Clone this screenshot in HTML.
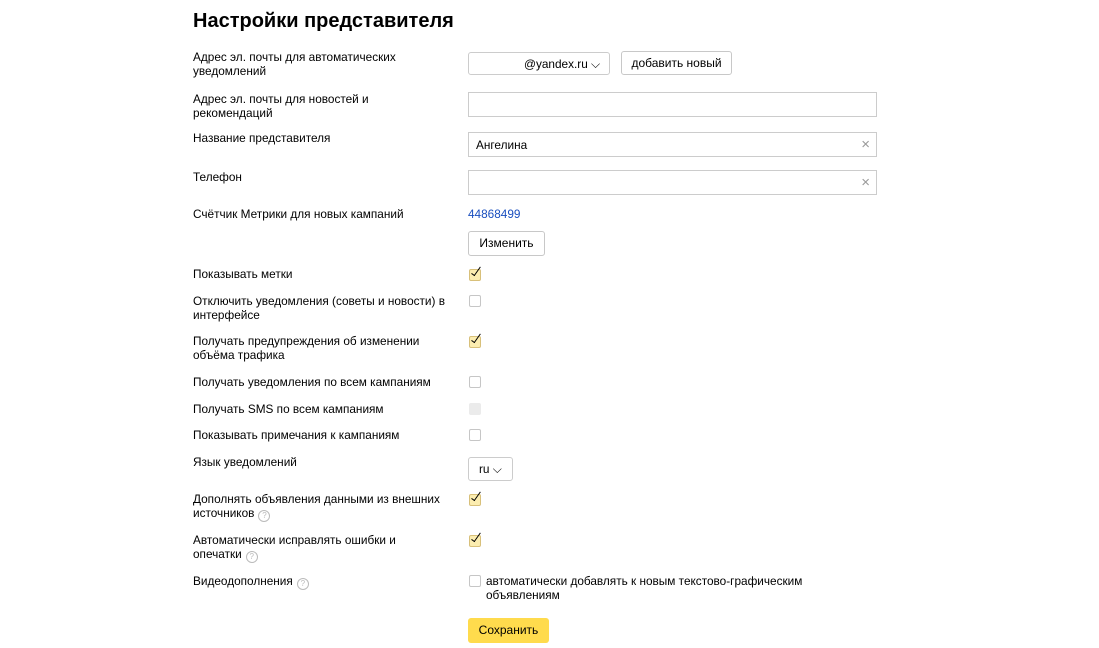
<!DOCTYPE html>
<html><head><meta charset="utf-8"><style>
body{margin:0;width:1099px;height:648px;background:#fff;font-family:"Liberation Sans",Arial,sans-serif;font-size:11.8px;color:#000;position:relative;overflow:hidden}
.a{position:absolute;line-height:14px;white-space:nowrap}
h1{position:absolute;left:193px;top:8px;margin:0;font-size:20px;font-weight:bold;line-height:26px}
.box{position:absolute;border:1px solid #ccc;box-sizing:border-box;background:#fff}
.btn{position:absolute;border:1px solid #c8c8c8;border-radius:3px;box-sizing:border-box;background:#fff;text-align:center;font-size:12px}
.cb{position:absolute;left:469px;width:12px;height:12px;border:1px solid #c6c6c6;border-radius:2px;box-sizing:border-box;background:#fff}
.cb.on{background:#fcedb0;border-color:#d8c07a}
.cb.on:after{content:"";position:absolute;left:4px;top:-5px;width:3px;height:10px;border:solid #000;border-width:0 1.5px 1.5px 0;transform:rotate(35deg)}
.cb.dis{background:#ebebeb;border-color:#ebebeb}
.q{display:inline-block;width:10px;height:10px;border:1px solid #bbb;border-radius:50%;font-size:8px;line-height:10px;text-align:center;color:#bbb;margin-left:4px;vertical-align:-1px}
.x{position:absolute;right:6px;top:4px;color:#999;font-size:15px;line-height:15px}
</style></head><body>
<h1>Настройки представителя</h1>
<div class="a" style="left:193px;top:50px">Адрес эл. почты для автоматических<br>уведомлений</div>
<div class="box" style="left:468px;top:52px;width:142px;height:23px;border-radius:3px"><span class="a" style="left:55px;top:4px">@yandex.ru ⌵</span></div>
<div class="btn" style="left:621px;top:51px;width:111px;height:24px;line-height:22px">добавить новый</div>
<div class="a" style="left:193px;top:92px">Адрес эл. почты для новостей и<br>рекомендаций</div>
<div class="box" style="left:468px;top:92px;width:409px;height:25px"></div>
<div class="a" style="left:193px;top:131px">Название представителя</div>
<div class="box" style="left:468px;top:132px;width:409px;height:25px"><span class="a" style="left:7px;top:5px">Ангелина</span><span class="x">×</span></div>
<div class="a" style="left:193px;top:170px">Телефон</div>
<div class="box" style="left:468px;top:170px;width:409px;height:25px"><span class="x">×</span></div>
<div class="a" style="left:193px;top:207px">Счётчик Метрики для новых кампаний</div>
<div class="a" style="left:468px;top:207px;color:#1a4fbf">44868499</div>
<div class="btn" style="left:468px;top:231px;width:77px;height:25px;line-height:23px">Изменить</div>
<div class="a" style="left:193px;top:267px">Показывать метки</div><div class="cb on" style="top:269px"></div>
<div class="a" style="left:193px;top:294px">Отключить уведомления (советы и новости) в<br>интерфейсе</div><div class="cb" style="top:295px"></div>
<div class="a" style="left:193px;top:334px">Получать предупреждения об изменении<br>объёма трафика</div><div class="cb on" style="top:336px"></div>
<div class="a" style="left:193px;top:375px">Получать уведомления по всем кампаниям</div><div class="cb" style="top:376px"></div>
<div class="a" style="left:193px;top:402px">Получать SMS по всем кампаниям</div><div class="cb dis" style="top:403px"></div>
<div class="a" style="left:193px;top:428px">Показывать примечания к кампаниям</div><div class="cb" style="top:429px"></div>
<div class="a" style="left:193px;top:455px">Язык уведомлений</div>
<div class="box" style="left:468px;top:457px;width:45px;height:24px;border-radius:3px"><span class="a" style="left:10px;top:4px">ru ⌵</span></div>
<div class="a" style="left:193px;top:492px">Дополнять объявления данными из внешних<br>источников<span class="q">?</span></div><div class="cb on" style="top:494px"></div>
<div class="a" style="left:193px;top:533px">Автоматически исправлять ошибки и<br>опечатки<span class="q">?</span></div><div class="cb on" style="top:535px"></div>
<div class="a" style="left:193px;top:574px">Видеодополнения<span class="q">?</span></div><div class="cb" style="top:575px"></div>
<div class="a" style="left:486px;top:574px">автоматически добавлять к новым текстово-графическим<br>объявлениям</div>
<div class="btn" style="left:468px;top:618px;width:81px;height:25px;line-height:25px;background:#ffdb4d;border:none">Сохранить</div>
</body></html>
